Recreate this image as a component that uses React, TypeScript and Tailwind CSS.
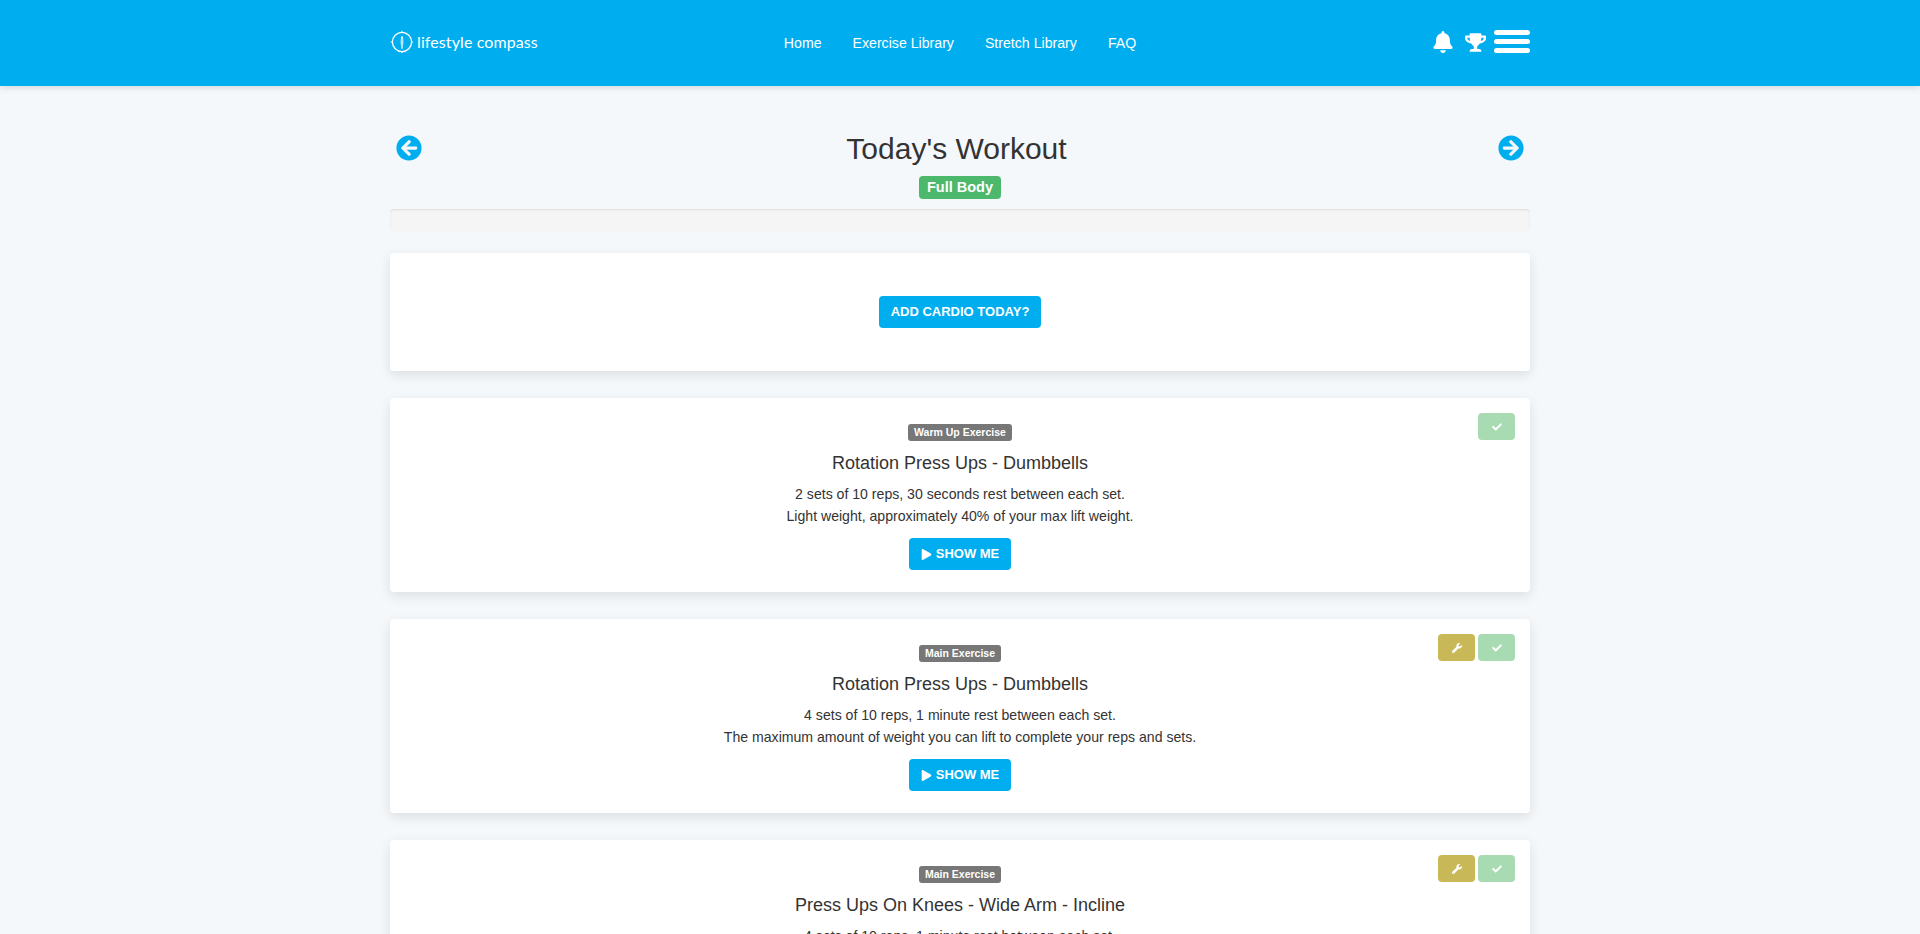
import { FaArrowCircleLeft, FaArrowCircleRight, FaBell, FaCheck, FaPlay, FaTrophy, FaWrench } from "react-icons/fa";

function Logo() {
  return (
    <div className="mb-[2px] flex items-center gap-[3px] text-white">
      <svg width="24" height="24" viewBox="0 0 24 24" fill="none" stroke="currentColor">
        <circle cx="12" cy="12" r="9.6" strokeWidth="1.3" />
        <path d="M12 0.8v2.2M12 21v2.2M0.8 12h2.2M21 12h2.2" strokeWidth="1" />
        <path d="M11 6.5h2l.3 6-.5 6h-1.6l-.5-6z" fill="currentColor" stroke="none" />
        <path d="M12 8v10" stroke="#00aeef" strokeWidth="0.6" />
      </svg>
      <span className="font-['Lato',sans-serif] text-[16px] tracking-[0.1px]">lifestyle compass</span>
    </div>
  );
}

function Header() {
  return (
    <header className="h-[86px] shrink-0 bg-[#00aeef] shadow-[0_2px_6px_rgba(0,0,0,0.12)]">
      <div className="mx-auto grid h-full w-[1140px] grid-cols-[1fr_auto_1fr] items-center">
        <Logo />
        <nav className="flex gap-[31px] pt-[1px] text-[14.15px] text-white">
          <span>Home</span>
          <span>Exercise Library</span>
          <span>Stretch Library</span>
          <span>FAQ</span>
        </nav>
        <div className="flex items-center justify-end text-white">
          <FaBell className="mb-[2px] mr-[11px] text-[22px]" />
          <FaTrophy className="mb-[1px] mr-[8px] text-[21px]" />
          <div className="mb-[3px] flex flex-col gap-[4px]">
            <div className="h-[5px] w-[36px] rounded-[3px] bg-white" />
            <div className="h-[5px] w-[36px] rounded-[3px] bg-white" />
            <div className="h-[5px] w-[36px] rounded-[3px] bg-white" />
          </div>
        </div>
      </div>
    </header>
  );
}

function ExerciseCard({ tag, title, lines, wrench }: { tag: string; title: string; lines: string[]; wrench?: boolean }) {
  return (
    <div className="relative flex h-[194px] shrink-0 flex-col items-center rounded-[4px] bg-white pt-[26px] text-center shadow-[0_4px_12px_rgba(0,0,0,0.1)]">
      <div className="absolute right-[15px] top-[15px] flex gap-[3px]">
        {wrench && (
          <button className="flex h-[27px] w-[37px] items-center justify-center rounded-[4px] bg-[#c9b857] text-[10px] text-white">
            <FaWrench />
          </button>
        )}
        <button className="flex h-[27px] w-[37px] items-center justify-center rounded-[4px] bg-[#a9dbb3] text-[10px] text-white">
          <FaCheck />
        </button>
      </div>
      <span className="flex h-[17px] items-center rounded-[3px] bg-[#777777] px-[6px] text-[10.5px] font-bold text-white">{tag}</span>
      <h3 className="mt-[12px] text-[18px] leading-[20px] text-[#333333]">{title}</h3>
      <div className="mt-[10px] text-[14.1px] leading-[22px] text-[#333333]">
        {lines.map((l) => (
          <p key={l}>{l}</p>
        ))}
      </div>
      <button className="mt-[11px] flex h-[32px] w-[102px] items-center justify-center gap-[4px] rounded-[4px] bg-[#00aeef] text-[13px] font-bold text-white">
        <FaPlay className="text-[11px]" />
        SHOW ME
      </button>
    </div>
  );
}

export default function App() {
  return (
    <div className="flex h-screen flex-col overflow-hidden bg-[#f4f8fb] font-['Liberation_Sans',sans-serif]">
      <Header />
      <main className="mx-auto flex w-[1140px] flex-col">
        <div className="mt-[48px] flex h-[28px] items-center justify-between px-[6px]">
          <FaArrowCircleLeft className="text-[26px] text-[#00aeef]" />
          <h1 className="mr-[7px] mt-[1px] text-[30px] leading-[28px] text-[#333333]">Today's Workout</h1>
          <FaArrowCircleRight className="text-[26px] text-[#00aeef]" />
        </div>
        <div className="mt-[14px] flex justify-center">
          <span className="flex h-[23px] w-[82px] items-center justify-center rounded-[4px] bg-[#4cb86c] text-[14.5px] font-bold text-white">Full Body</span>
        </div>
        <div className="mt-[10px] h-[22px] rounded-[4px] bg-[#f5f5f5] shadow-[inset_0_1px_2px_rgba(0,0,0,0.1)]" />
        <div className="mt-[22px] flex h-[118px] shrink-0 items-center justify-center rounded-[4px] bg-white shadow-[0_4px_12px_rgba(0,0,0,0.1)]">
          <button className="h-[32px] w-[162px] rounded-[4px] bg-[#00aeef] text-[13px] font-bold text-white">ADD CARDIO TODAY?</button>
        </div>
        <div className="mt-[27px] flex flex-col gap-[27px]">
          <ExerciseCard
            tag="Warm Up Exercise"
            title="Rotation Press Ups - Dumbbells"
            lines={["2 sets of 10 reps, 30 seconds rest between each set.", "Light weight, approximately 40% of your max lift weight."]}
          />
          <ExerciseCard
            wrench
            tag="Main Exercise"
            title="Rotation Press Ups - Dumbbells"
            lines={["4 sets of 10 reps, 1 minute rest between each set.", "The maximum amount of weight you can lift to complete your reps and sets."]}
          />
          <ExerciseCard
            wrench
            tag="Main Exercise"
            title="Press Ups On Knees - Wide Arm - Incline"
            lines={["4 sets of 10 reps, 1 minute rest between each set.", "The maximum amount of weight you can lift to complete your reps and sets."]}
          />
        </div>
      </main>
    </div>
  );
}
